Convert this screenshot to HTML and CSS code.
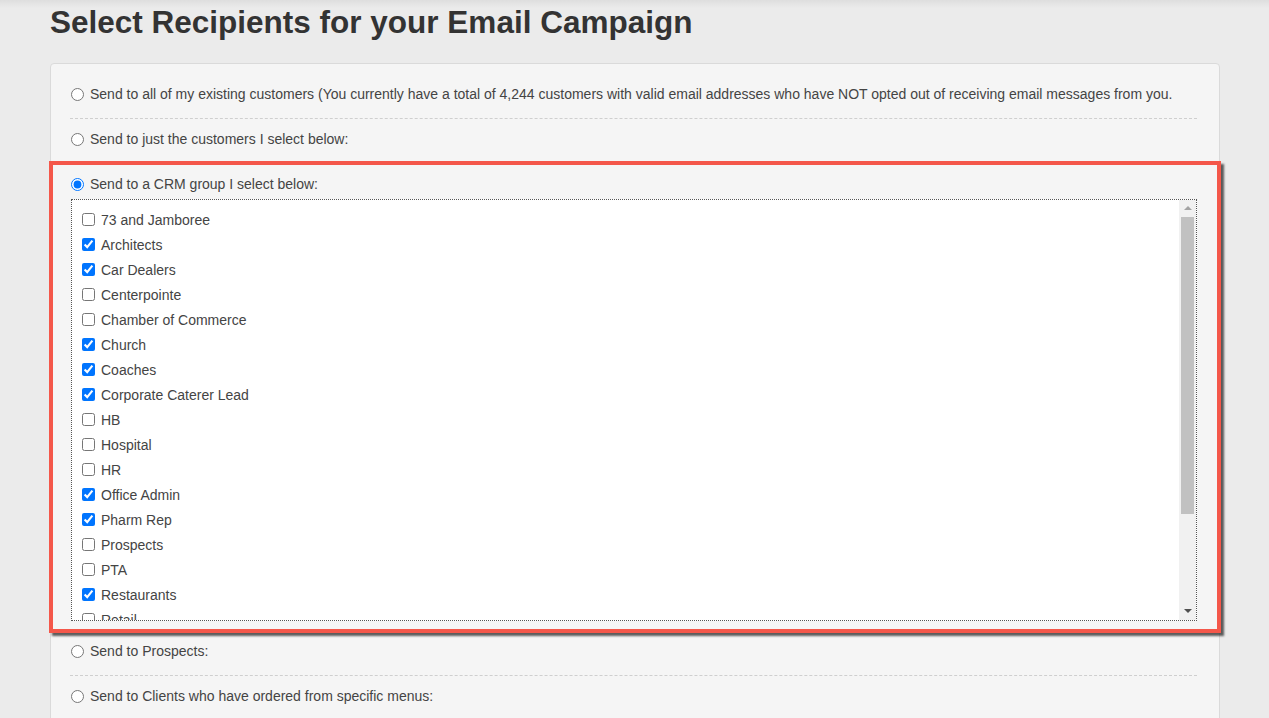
FILE: index.html
```html
<!DOCTYPE html>
<html lang="en">
<head>
<meta charset="utf-8">
<title>Select Recipients</title>
<link rel="stylesheet" href="styles.css">
</head>
<body>
<div class="page">
  <h1 class="title">Select Recipients for your Email Campaign</h1>
  <div class="panel">
    <label class="opt opt-first narrow"><input type="radio" name="r"><span>Send to all of my existing customers (You currently have a total of 4,244 customers with valid email addresses who have NOT opted out of receiving email messages from you.</span></label>
    <label class="opt opt-second narrow"><input type="radio" name="r"><span>Send to just the customers I select below:</span></label>
    <div class="highlight">
      <label class="opt-crm"><input type="radio" name="r" checked><span>Send to a CRM group I select below:</span></label>
      <div class="listbox">
        <div class="items">
          <label class="item"><input type="checkbox"><span>73 and Jamboree</span></label>
          <label class="item"><input type="checkbox" checked><span>Architects</span></label>
          <label class="item"><input type="checkbox" checked><span>Car Dealers</span></label>
          <label class="item"><input type="checkbox"><span>Centerpointe</span></label>
          <label class="item"><input type="checkbox"><span>Chamber of Commerce</span></label>
          <label class="item"><input type="checkbox" checked><span>Church</span></label>
          <label class="item"><input type="checkbox" checked><span>Coaches</span></label>
          <label class="item"><input type="checkbox" checked><span>Corporate Caterer Lead</span></label>
          <label class="item"><input type="checkbox"><span>HB</span></label>
          <label class="item"><input type="checkbox"><span>Hospital</span></label>
          <label class="item"><input type="checkbox"><span>HR</span></label>
          <label class="item"><input type="checkbox" checked><span>Office Admin</span></label>
          <label class="item"><input type="checkbox" checked><span>Pharm Rep</span></label>
          <label class="item"><input type="checkbox"><span>Prospects</span></label>
          <label class="item"><input type="checkbox"><span>PTA</span></label>
          <label class="item"><input type="checkbox" checked><span>Restaurants</span></label>
          <label class="item"><input type="checkbox"><span>Retail</span></label>
        </div>
        <div class="scrollbar">
          <span class="arrow arrow-up"></span>
          <span class="thumb"></span>
          <span class="arrow arrow-down"></span>
        </div>
      </div>
    </div>
    <label class="opt opt-after"><input type="radio" name="r"><span>Send to Prospects:</span></label>
    <label class="opt opt-last"><input type="radio" name="r"><span>Send to Clients who have ordered from specific menus:</span></label>
  </div>
</div>
</body>
</html>
```

FILE: styles.css
```css
* { box-sizing: border-box; }
html, body { margin: 0; padding: 0; }
body {
  background: linear-gradient(#dedede 0, #ebebeb 8px, #ebebeb 100%);
  font-family: "Liberation Sans", Arial, sans-serif;
  color: #444;
  height: 718px;
  overflow: hidden;
}
.page {
  padding: 0 49px 0 50px;
}
.title {
  margin: 0;
  padding: 4px 0 22px;
  font-size: 31.5px;
  line-height: 37px;
  font-weight: bold;
  color: #333;
}
.panel {
  background: #f5f5f5;
  border: 1px solid #dadada;
  border-radius: 4px;
  padding: 0 22px 0 19px;
  height: 700px;
}
.opt {
  display: flex;
  align-items: center;
  font-size: 14px;
  line-height: 17px;
  color: #444;
}
.opt input, .opt-crm input {
  margin: 0 6px 0 1px;
  width: 13px;
  height: 13px;
}
.opt-first {
  padding: 22px 0 15px;
  border-bottom: 1px dashed #cfcfcf;
}
.opt-second {
  padding: 12px 0 13px;
}
.opt-after {
  padding: 10px 0 15px;
  border-bottom: 1px dashed #cfcfcf;
}
.opt-last {
  padding: 12px 0;
}
.highlight {
  margin: 0 -24px 0 -21px;
  border: 4px solid #f4574a;
  box-shadow: 3px 3px 2px rgba(40, 40, 40, 0.75);
  background: #f5f5f5;
  padding: 10px 20px 8px 18px;
}
.opt-crm {
  display: flex;
  align-items: center;
  font-size: 14px;
  line-height: 18px;
  color: #444;
  margin-bottom: 6px;
}
.opt-crm input { margin: 0 6px 0 0; }
.listbox {
  display: flex;
  height: 422px;
  border: 1px dotted #555;
  background: #fff;
}
.items {
  flex: 1;
  overflow: hidden;
  padding: 7px 0 0 10px;
}
.item {
  display: flex;
  align-items: center;
  height: 25px;
  font-size: 14px;
  color: #444;
}
.item input {
  margin: 0 6px 0 0;
  width: 13px;
  height: 13px;
}
.scrollbar {
  width: 17px;
  background: #f1f1f1;
  display: flex;
  flex-direction: column;
  align-items: center;
}
.arrow {
  width: 0;
  height: 0;
  border-left: 4px solid transparent;
  border-right: 4px solid transparent;
  margin: 6px 0 7px;
}
.arrow-up { border-bottom: 4px solid #a3a3a3; }
.arrow-down { border-top: 4px solid #505050; margin-top: auto; }
.thumb {
  width: 13px;
  height: 297px;
  background: #c1c1c1;
}
```
